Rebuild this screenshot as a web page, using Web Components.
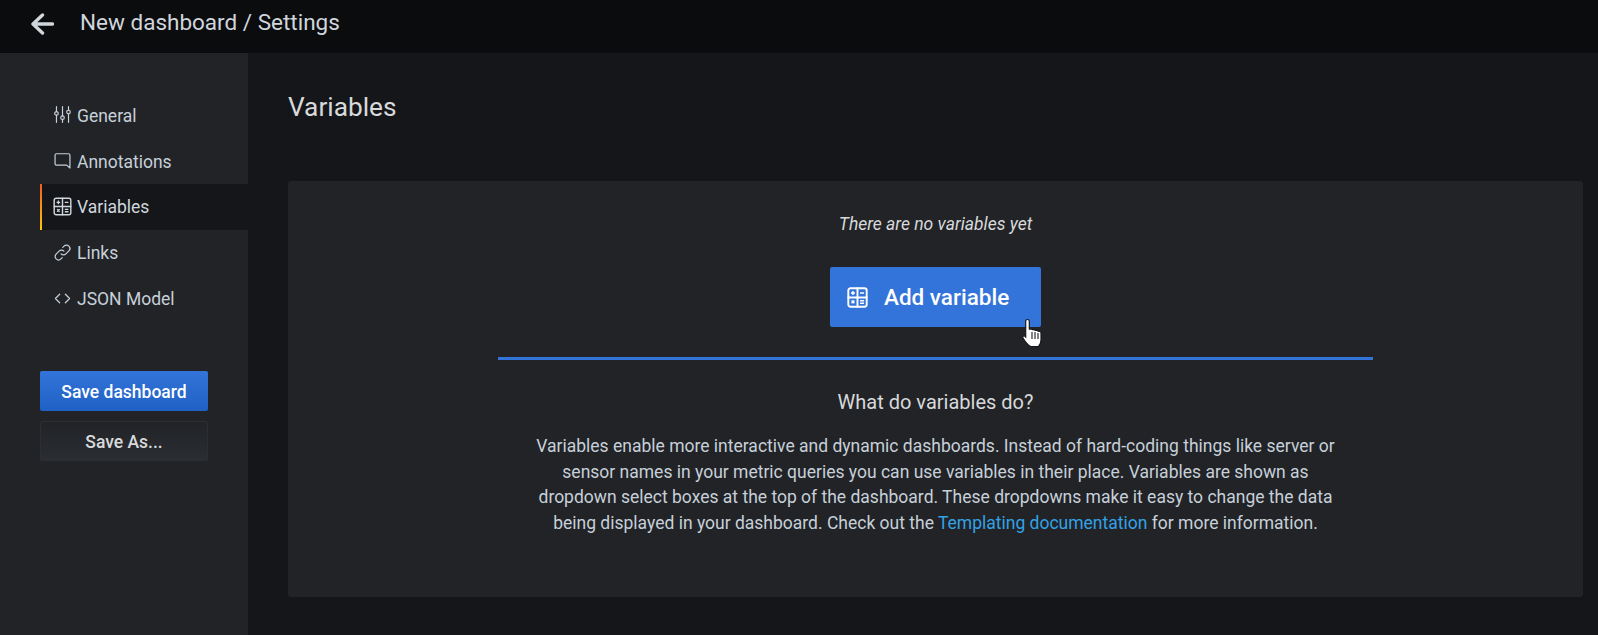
<!DOCTYPE html>
<html>
<head>
<meta charset="utf-8">
<title>New dashboard / Settings</title>
<style>
  html, body { margin: 0; height: 100%; background: #141619; overflow: hidden; }
  body { font-family: "Roboto", sans-serif; color: #d8d9da; }
</style>
</head>
<body>
<settings-page></settings-page>

<script>
const ICONS = {
  general: `<path d="M3.500 1v7M3.500 13v10M12 1v13M12 19v4M20.500 1v5M20.500 11v12" /><circle cx="3.500" cy="10.500" r="2.500"/><circle cx="12" cy="16.500" r="2.500"/><circle cx="20.500" cy="8.500" r="2.500"/>`,
  annotations: `<path d="M3.500 2.500h17a2 2 0 0 1 2 2v18l-4.500-4H3.500a2 2 0 0 1-2-2v-12a2 2 0 0 1 2-2z" />`,
  variables: `<rect x="1.500" y="1.500" width="21" height="21" rx="2.500"/><path d="M12 1.500v21M1.500 12h21"/><path stroke-width="1.700" stroke-linecap="butt" d="M4.500 6.800h4.600M6.800 4.500v4.600M14.900 6.800h4.600M14.900 15.600h4.600M14.900 18.600h4.600M5.200 15.400l3.200 3.200M8.400 15.400l-3.200 3.200"/>`,
  links: `<path d="M10 14a4.800 4.800 0 0 0 6.800 0l4.200-4.200a4.800 4.800 0 0 0-6.800-6.800l-1.800 1.800"/><path d="M14 10a4.800 4.800 0 0 0-6.800 0L3 14.200a4.800 4.800 0 0 0 6.800 6.800l1.800-1.800"/>`,
  code: `<path d="M8 6l-6 6 6 6M16 6l6 6-6 6"/>`
}

function icon (name, size, width, cls) {
  return `<svg class="${cls || ''}" width="${size}" height="${size}" viewBox="0 0 24 24" fill="none" stroke="currentColor" stroke-width="${width}" stroke-linecap="round" stroke-linejoin="round">${ICONS[name]}</svg>`
}

class DashTopbar extends HTMLElement {
  constructor () {
    super()
    this.attachShadow({ mode: 'open' })
  }

  connectedCallback () {
    this.shadowRoot.innerHTML = `
      <style>
        :host {
          display: flex;
          align-items: center;
          height: 53px;
          background: #0b0c0e;
          padding-left: 30px;
          box-sizing: border-box;
          color: #c7d0d9;
        }
        svg { display: block; margin-right: 26px; margin-top: -6px; }
        h1 { margin: 0 0 9px; font-size: 22.500px; font-weight: 400; color: #d0d6dd; }
      </style>
      <svg width="24" height="24" viewBox="0 0 24 24" fill="none" stroke="#d0d6dd" stroke-width="3.400" stroke-linecap="round" stroke-linejoin="round">
        <path d="M22.500 12H4M12.500 3L3 12l9.500 9"/>
      </svg>
      <h1><slot></slot></h1>`
  }
}

class NavItem extends HTMLElement {
  constructor () {
    super()
    this.attachShadow({ mode: 'open' })
  }

  connectedCallback () {
    const big = this.hasAttribute('active')
    this.shadowRoot.innerHTML = `
      <style>
        :host {
          display: flex;
          align-items: center;
          gap: 6px;
          height: 46px;
          padding-left: 14px;
          font-size: 17.500px;
          color: #c7d0d9;
          box-sizing: border-box;
        }
        :host([raised]) { padding-top: 1px; }
        :host([active]) {
          background: #141619;
          border-left: 2px solid;
          border-image: linear-gradient(#f05a28, #fbca0a) 1;
          color: #d0d6dd;
          padding-left: 11px;
          gap: 5px;
        }
        svg { display: block; flex: none; margin-bottom: 2px; }
      </style>
      ${icon(this.getAttribute('icon'), big ? 19 : 17, big ? 1.800 : 1.700)}
      <slot></slot>`
  }
}

class DashButton extends HTMLElement {
  constructor () {
    super()
    this.attachShadow({ mode: 'open' })
  }

  connectedCallback () {
    this.shadowRoot.innerHTML = `
      <style>
        :host {
          display: flex;
          align-items: center;
          justify-content: center;
          width: 168px;
          height: 40px;
          padding-top: 1px;
          box-sizing: border-box;
          border-radius: 2px;
          font-size: 17.500px;
          font-weight: 500;
          background: linear-gradient(#3274d9, #1f60c4);
          color: #fff;
        }
        :host([variant=secondary]) {
          background: linear-gradient(#212327, #2a2d32);
          border: 1px solid #2c2e33;
          color: #d8d9da;
        }
      </style>
      <slot></slot>`
  }
}

class SettingsSidebar extends HTMLElement {
  constructor () {
    super()
    this.attachShadow({ mode: 'open' })
  }

  connectedCallback () {
    this.shadowRoot.innerHTML = `
      <style>
        :host {
          display: flex;
          flex-direction: column;
          width: 248px;
          flex: none;
          background: #212327;
          padding: 39px 0 0 40px;
          box-sizing: border-box;
        }
        .actions {
          display: flex;
          flex-direction: column;
          gap: 10px;
          margin-top: 49px;
        }
      </style>
      <nav>
        <nav-item icon="general" raised>General</nav-item>
        <nav-item icon="annotations" raised>Annotations</nav-item>
        <nav-item icon="variables" active>Variables</nav-item>
        <nav-item icon="links">Links</nav-item>
        <nav-item icon="code">JSON Model</nav-item>
      </nav>
      <div class="actions">
        <dash-button>Save dashboard</dash-button>
        <dash-button variant="secondary">Save As...</dash-button>
      </div>`
  }
}

class EmptyVariables extends HTMLElement {
  constructor () {
    super()
    this.attachShadow({ mode: 'open' })
  }

  connectedCallback () {
    this.shadowRoot.innerHTML = `
      <style>
        :host {
          display: flex;
          flex-direction: column;
          align-items: center;
          height: 416px;
          box-sizing: border-box;
          background: #212327;
          border-radius: 3px;
          padding-top: 32px;
          font-size: 17.500px;
          color: #d8d9da;
        }
        .title { font-style: italic; line-height: 22px; }
        .add {
          position: relative;
          display: flex;
          align-items: center;
          width: 211px;
          height: 60px;
          margin-top: 32px;
          padding-left: 17px;
          box-sizing: border-box;
          background: #3274d9;
          border-radius: 2px;
          color: #fff;
          font-size: 22.500px;
          font-weight: 500;
        }
        .glyph { display: block; margin-right: 16px; }
        .cursor { position: absolute; left: 191px; top: 51px; }
        .rule { width: 875px; height: 3px; margin-top: 30px; background: #3274d9; }
        h3 { margin: 29px 0 0; font-size: 20px; font-weight: 400; line-height: 27px; color: #d8d9da; }
        p {
          width: 812px;
          margin: 18px 0 0;
          text-align: center;
          line-height: 25.700px;
          font-size: 17.500px;
          color: #c7d0d9;
        }
        a { color: #33a2e5; text-decoration: none; }
      </style>
      <div class="title">There are no variables yet</div>
      <div class="add">
        ${icon('variables', 21, 2.200, 'glyph')}
        <span>Add variable</span>
        <svg class="cursor" width="22" height="30" viewBox="0 0 22 30">
          <path d="M6.500 1.500c1 0 1.800.8 1.800 1.800V11l2-.2 1 .9 1.800-.4 1.100 1 1.700-.2 1.100 1 1.800.2c1 .3 1.200 1.200 1.200 2.200V22c0 3-1.200 5.200-2.500 6.500H9.500C7 27 3.500 22.500 2 20c-.8-1.300.4-2.700 1.700-2l1 1V3.300c0-1 .8-1.800 1.800-1.800z" fill="#fff" stroke="#16181c" stroke-width="1.200"/>
          <path d="M11 14v7M14 14v7M17 15v6" stroke="#16181c" stroke-width="1.100"/>
        </svg>
      </div>
      <div class="rule"></div>
      <h3>What do variables do?</h3>
      <p>Variables enable more interactive and dynamic dashboards. Instead of hard-coding things like server or sensor names in your metric queries you can use variables in their place. Variables are shown as dropdown select boxes at the top of the dashboard. These dropdowns make it easy to change the data being displayed in your dashboard. Check out the <a href="#">Templating documentation</a> for more information.</p>`
  }
}

class SettingsPage extends HTMLElement {
  constructor () {
    super()
    this.attachShadow({ mode: 'open' })
  }

  connectedCallback () {
    this.shadowRoot.innerHTML = `
      <style>
        :host {
          display: flex;
          flex-direction: column;
          height: 635px;
          overflow: hidden;
        }
        .body { display: flex; flex: 1; }
        main { flex: 1; padding: 36px 15px 0 40px; background: #141619; }
        h2 {
          margin: 0 0 56px;
          font-size: 26.250px;
          font-weight: 400;
          line-height: 36px;
          color: #d8d9da;
        }
      </style>
      <dash-topbar>New dashboard / Settings</dash-topbar>
      <div class="body">
        <settings-sidebar></settings-sidebar>
        <main>
          <h2>Variables</h2>
          <empty-variables></empty-variables>
        </main>
      </div>`
  }
}

customElements.define('dash-topbar', DashTopbar)
customElements.define('nav-item', NavItem)
customElements.define('dash-button', DashButton)
customElements.define('settings-sidebar', SettingsSidebar)
customElements.define('empty-variables', EmptyVariables)
customElements.define('settings-page', SettingsPage)
</script>
</body>
</html>
